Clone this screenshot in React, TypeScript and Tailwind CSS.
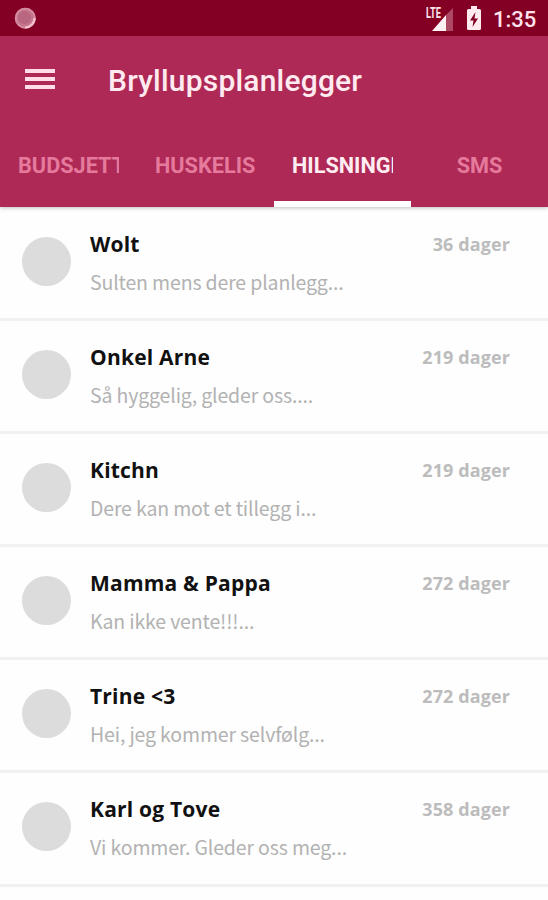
interface Message {
  name: string;
  text: string;
  age: string;
}

const TABS = ['BUDSJETT', 'HUSKELIS', 'HILSNINGER', 'SMS'];
const ACTIVE_TAB = 'HILSNINGER';

const MESSAGES: Message[] = [
  { name: 'Wolt', text: 'Sulten mens dere planlegg...', age: '36 dager' },
  { name: 'Onkel Arne', text: 'Så hyggelig, gleder oss....', age: '219 dager' },
  { name: 'Kitchn', text: 'Dere kan mot et tillegg i...', age: '219 dager' },
  { name: 'Mamma & Pappa', text: 'Kan ikke vente!!!...', age: '272 dager' },
  { name: 'Trine <3', text: 'Hei, jeg kommer selvfølg...', age: '272 dager' },
  { name: 'Karl og Tove', text: 'Vi kommer. Gleder oss meg...', age: '358 dager' },
];

function StatusBar() {
  return (
    <div className="flex h-9 items-center bg-[#830024] pl-[14px] pr-[13px] text-[#ffe3ec]">
      <svg width="23" height="23" viewBox="0 0 23 23">
        <circle cx="11.3" cy="11.2" r="10.5" fill="#c5758c" />
        <circle cx="11.3" cy="11.2" r="9.5" fill="none" stroke="#d48da1" strokeWidth="1.8" />
        <path d="M20.5 11A9.3 9.3 0 0 1 11 20.5" fill="none" stroke="#f5c3d0" strokeWidth="2.2" />
        <circle cx="10.5" cy="10.5" r="6.5" fill="#b96680" />
      </svg>
      <svg className="ml-auto" width="28" height="26" viewBox="0 0 28 26">
        <path d="M27 3v23h-7V10z" fill="#ad4865" />
        <path d="M20 10v16H6z" fill="#fff0f4" />
        <text x="0" y="13" fill="#ffe3ec" fontFamily="Roboto, sans-serif" fontSize="14" fontWeight="700" textLength="15" lengthAdjust="spacingAndGlyphs">LTE</text>
      </svg>
      <svg className="ml-[13px]" width="14" height="24" viewBox="0 0 14 24">
        <path d="M4 0h6v3h2.500q1.500 0 1.500 1.500v18q0 1.500-1.500 1.500h-11Q0 24 0 22.500v-18Q0 3 1.500 3H4z" fill="#ffeaf0" />
        <path d="M8.500 6 3 14.500h3.500L5.500 21 11 12.500H7.500z" fill="#830024" />
      </svg>
      <span className="ml-[12px] w-[42px] whitespace-nowrap pt-[3px] text-[22px] font-medium leading-none">1:35</span>
    </div>
  );
}

function AppBar() {
  return (
    <div className="flex h-[89px] items-center pl-[25px] text-[#ffeaf0]">
      <div className="mb-[3px] flex w-[30px] flex-col gap-1">
        <span className="h-1 bg-[#ffdce7]" />
        <span className="h-1 bg-[#ffdce7]" />
        <span className="h-1 bg-[#ffdce7]" />
      </div>
      <h1 className="ml-[53px] whitespace-nowrap text-[30px] font-medium leading-none tracking-[0.2px]">Bryllupsplanlegger</h1>
    </div>
  );
}

function Tabs() {
  return (
    <nav className="grid h-[82px] grid-cols-4">
      {TABS.map((tab) => {
        const active = tab === ACTIVE_TAB;
        return (
          <div
            key={tab}
            className={`flex justify-center border-b-[6px] pt-[27px] ${
              active ? 'border-white text-[#ffedf2]' : 'border-transparent text-[#e57a9d]'
            }`}
          >
            <span
              className={`h-7 overflow-hidden whitespace-nowrap text-[21.700px] font-bold leading-7 ${
                tab === 'SMS' ? '' : 'w-[101px]'
              }`}
            >
              {tab}
            </span>
          </div>
        );
      })}
    </nav>
  );
}

function MessageRow({ name, text, age }: Message) {
  return (
    <li className="flex h-[113.100px] border-b-[3px] border-[#f1f1f1] pl-[22px] pr-[38px]">
      <div className="mt-[29px] size-[49px] shrink-0 rounded-full bg-[#dcdcdc]" />
      <div className="ml-[19px] flex-1 whitespace-nowrap">
        <div className="flex items-center justify-between pt-[22px] font-['Open_Sans',sans-serif] font-bold leading-7">
          <span className="text-[21px] tracking-[0.2px] text-[#111]">{name}</span>
          <span className="text-[18px] tracking-[0.1px] text-[#bcbcbc]">{age}</span>
        </div>
        <p className="mt-[10px] font-['Noto_Sans_CJK_SC',sans-serif] text-[19.500px] leading-7 tracking-[-0.15px] text-[#b2b2b2]">{text}</p>
      </div>
    </li>
  );
}

export default function App() {
  return (
    <div className="h-[900px] w-[548px] overflow-hidden bg-[#fefefe] font-[Roboto,sans-serif]">
      <header className="relative h-[207px] bg-[#ae2955] shadow-[0_1px_4px_rgba(0,0,0,0.25)]">
        <StatusBar />
        <AppBar />
        <Tabs />
      </header>
      <ul className="pt-[1px]">
        {MESSAGES.map((message) => (
          <MessageRow key={message.name} {...message} />
        ))}
      </ul>
    </div>
  );
}
